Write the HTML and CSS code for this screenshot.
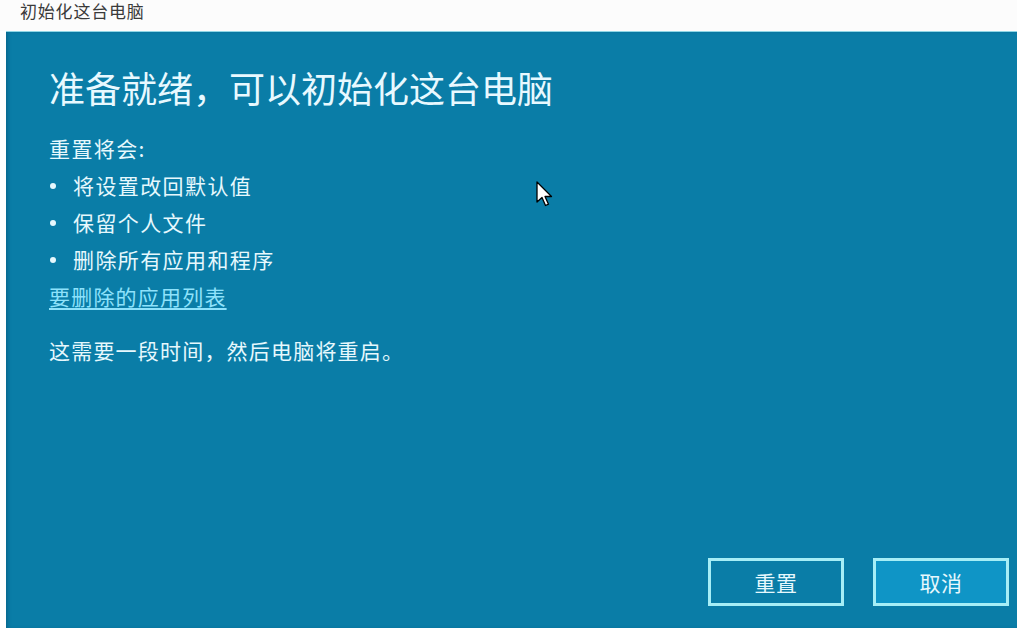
FILE: index.html
```html
<!DOCTYPE html>
<html lang="zh-CN">
<head>
<meta charset="utf-8">
<title>初始化这台电脑</title>
<link rel="stylesheet" href="styles.css">
</head>
<body>
<div class="titlebar">初始化这台电脑</div>
<main class="window">
  <h1 class="heading">准备就绪，可以初始化这台电脑</h1>
  <p class="intro">重置将会:</p>
  <ul class="list">
    <li>将设置改回默认值</li>
    <li>保留个人文件</li>
    <li>删除所有应用和程序</li>
  </ul>
  <a class="link" href="#">要删除的应用列表</a>
  <p class="note">这需要一段时间，然后电脑将重启。</p>
  <div class="actions">
    <button class="btn">重置</button>
    <button class="btn btn-focus">取消</button>
  </div>
  <svg class="cursor" width="17" height="27" viewBox="0 0 17 27" aria-hidden="true">
    <path d="M1 1 L1 21 L6 16.5 L9.5 24.5 L12.5 23.2 L9 15.5 L15.5 15.5 Z" fill="#ffffff" stroke="#000000" stroke-width="1.3" stroke-linejoin="round"/>
  </svg>
</main>
</body>
</html>
```
FILE: styles.css
```css
html, body {
  margin: 0;
  padding: 0;
  background: #ffffff;
  height: 100%;
  overflow: hidden;
}
body {
  font-family: "Noto Sans CJK SC", "Noto Sans", sans-serif;
  display: flex;
  flex-direction: column;
  height: 628px;
}
.titlebar {
  height: 31px;
  line-height: 22px;
  padding-left: 20px;
  font-size: 17px;
  letter-spacing: 0.8px;
  color: #3a3a3a;
  background: #fcfcfc;
  flex: none;
}
.window {
  position: relative;
  flex: 1;
  margin-left: 6px;
  background: #0a7da7;
  border-top: 1px solid #8fd6e6;
  padding: 0 8px 22px 43px;
  display: flex;
  flex-direction: column;
  color: #e6f8fd;
  box-shadow: inset 3px 0 4px -2px rgba(0, 40, 70, 0.35);
}
.heading {
  margin: 31px 0 0 0;
  font-size: 36px;
  line-height: 48px;
  font-weight: 400;
  color: #e8f9ff;
  letter-spacing: 0px;
}
.intro {
  margin: 19px 0 0 0;
  font-size: 21px;
  line-height: 37px;
  letter-spacing: 1.4px;
}
.list {
  list-style: none;
  margin: 0;
  padding: 0;
  font-size: 21px;
  line-height: 37px;
  letter-spacing: 1.4px;
}
.list li {
  display: flex;
  align-items: center;
}
.list li::before {
  content: "";
  width: 6px;
  height: 6px;
  border-radius: 50%;
  background: #e6f8fd;
  margin-left: 1px;
  margin-right: 17px;
  flex: none;
}
.link {
  font-size: 21px;
  line-height: 37px;
  color: #8ee2fb;
  text-decoration: underline;
  text-underline-offset: 3px;
  align-self: flex-start;
  letter-spacing: 1.2px;
}
.note {
  margin: 17px 0 0 0;
  font-size: 21px;
  line-height: 37px;
  letter-spacing: 1.2px;
}
.actions {
  margin-top: auto;
  display: flex;
  justify-content: flex-end;
  gap: 29px;
}
.btn {
  width: 136px;
  height: 48px;
  border: 3px solid #a6eef6;
  background: #0a7da7;
  color: #e6f8fd;
  font-family: "Noto Sans CJK SC", "Noto Sans", sans-serif;
  font-size: 21px;
  padding: 0;
  letter-spacing: 0.5px;
}
.btn-focus {
  background: #0f95c6;
}
.cursor {
  position: absolute;
  left: 530px;
  top: 149px;
}
```
